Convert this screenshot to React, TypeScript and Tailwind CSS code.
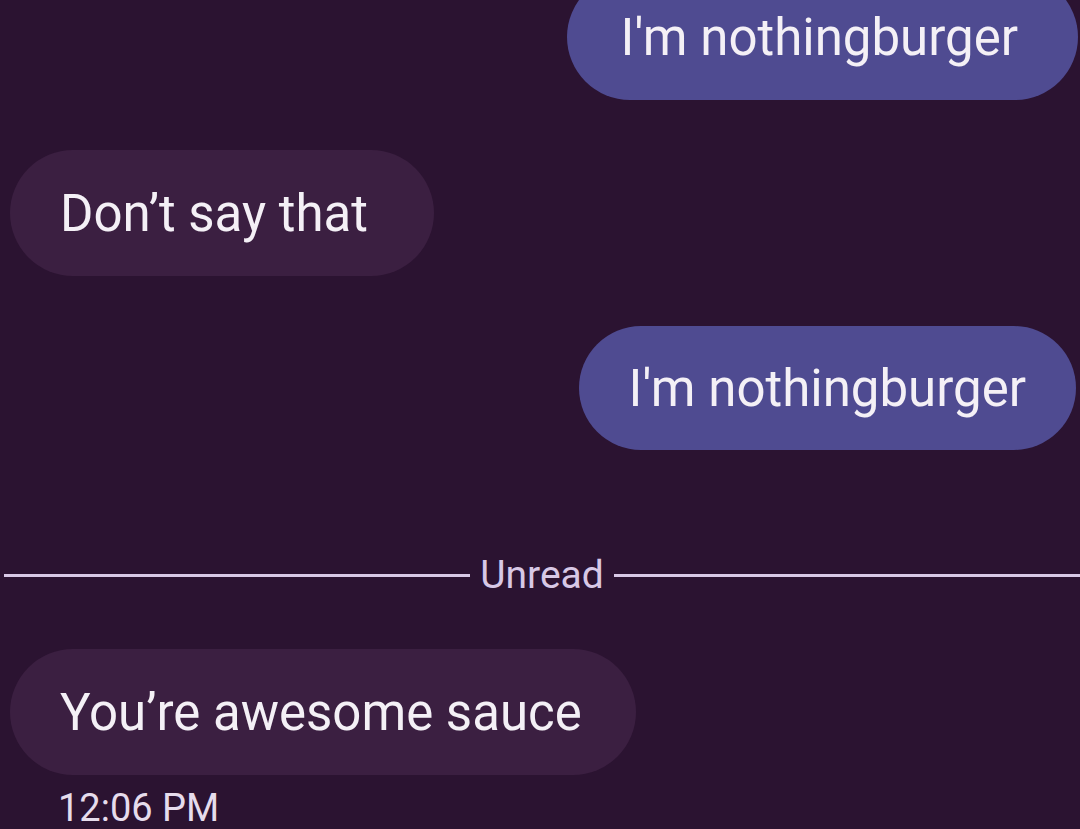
export default function App() {
  return (
    <div
      className="flex h-[829px] w-[1080px] flex-col overflow-hidden bg-[#2b1331] text-[#f4f0f6]"
      style={{ fontFamily: "Roboto, 'Noto Sans', sans-serif" }}
    >
      <div className="-mt-[26px] mr-[2px] flex h-[126px] items-center self-end rounded-full bg-[#4f4b91] pl-[54px] pr-[60px] text-[51px] leading-none">
        I'm nothingburger
      </div>
      <div className="mt-[50px] ml-[10px] flex h-[126px] items-center self-start rounded-full bg-[#3b1f41] pl-[50px] pr-[66px] text-[51px] leading-none">
        Don’t say that
      </div>
      <div className="mt-[50px] mr-[4px] flex h-[124px] items-center self-end rounded-full bg-[#4f4b91] px-[50px] text-[51px] leading-none">
        I'm nothingburger
      </div>
      <div className="mt-[105px] flex h-[40px] items-center gap-[10px] pl-[4px]">
        <div className="h-[3px] flex-1 bg-[#d8c8e6]" />
        <span className="text-[39px] leading-none text-[#d8c8e6]">Unread</span>
        <div className="h-[3px] flex-1 bg-[#d8c8e6]" />
      </div>
      <div className="mt-[54px] ml-[10px] flex h-[126px] items-center self-start rounded-full bg-[#3b1f41] pl-[50px] pr-[54px] text-[51px] leading-none">
        You’re awesome sauce
      </div>
      <div className="mt-[14px] ml-[58px] text-[38px] leading-none text-[#e6dcec]">12:06 PM</div>
    </div>
  );
}
